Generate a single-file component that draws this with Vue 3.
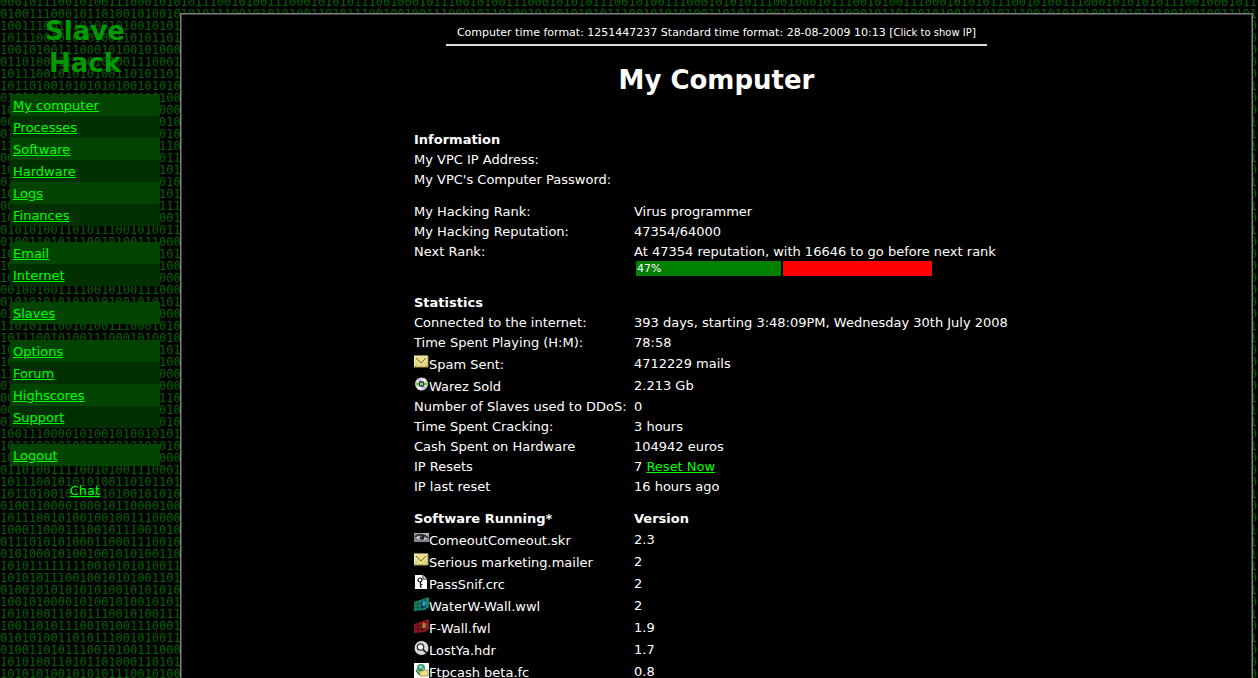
<template>
  <div class="page">
    <pre class="page__bits" aria-hidden="true">{{ backdrop }}</pre>

    <aside class="side">
      <h2 class="side__logo">Slave<br />Hack</h2>
      <nav class="side__nav">
        <ul v-for="(group, i) in menu" :key="i" class="side__group">
          <li v-for="item in group" :key="item" class="side__item">
            <a href="#" class="link">{{ item }}</a>
          </li>
        </ul>
      </nav>
      <a href="#" class="link side__chat">Chat</a>
    </aside>

    <main class="panel">
      <div class="clock">
        Computer time format: 1251447237 Standard time format: 28-08-2009 10:13
        [<button type="button" class="clock__ip">Click to show IP</button>]
      </div>
      <h1 class="panel__title">My Computer</h1>

      <table class="info">
        <tbody v-for="section in sections" :key="section.id" class="info__section">
          <tr v-if="section.title">
            <th scope="col">{{ section.title }}</th>
            <th scope="col">{{ section.second }}</th>
          </tr>
          <tr v-for="row in section.rows" :key="row.label" :class="{ 'info__row--icon': row.icon }">
            <td>
              <span class="info__label">
                <svg v-if="row.icon" class="icon" viewBox="0 0 15 15" aria-hidden="true">
                  <g v-if="row.icon === 'mail'">
                    <rect x="0" y="1" width="14" height="11" fill="#e8dc8c" />
                    <path d="M0 12V1h14" fill="none" stroke="#fff6bd" />
                    <path d="M0 12h14V1" fill="none" stroke="#a3924b" />
                    <path d="M2 3l5 5 5-5" fill="none" stroke="#7b692b" />
                    <path d="M1 11l3-3M13 11l-3-3" fill="none" stroke="#c9b866" />
                  </g>
                  <g v-else-if="row.icon === 'disc'">
                    <circle cx="7.5" cy="7" r="6.5" fill="#dedede" />
                    <path d="M7.5 7L1 5v4zM7.5 7L14 5v4z" fill="#72d72f" />
                    <path d="M7.5 7L3 2l3-1zM7.5 7l5 4-3 2z" fill="#c6a6e4" />
                    <path d="M7.5 7l3-6 2 2zM7.5 7l-4 5 3 1z" fill="#fff" />
                    <circle cx="7.5" cy="7" r="3" fill="#153c36" />
                    <circle cx="7.5" cy="7" r="1.5" fill="#eee" />
                    <circle cx="7.5" cy="7" r="0.6" fill="#000" />
                  </g>
                  <g v-else-if="row.icon === 'eye'">
                    <rect x="0" y="2" width="15" height="9" fill="#858585" />
                    <path d="M0 3q7-2 15 2V2H0z" fill="#b8b8b8" />
                    <path d="M1 6q6-5 13 1-7 5-13-1z" fill="#c9c9c9" />
                    <path d="M1 6q6-5 13 1" fill="none" stroke="#292929" stroke-width="1.5" />
                    <circle cx="8" cy="6.5" r="2.4" fill="#202020" />
                    <circle cx="7.2" cy="5.8" r="0.6" fill="#ddd" />
                  </g>
                  <g v-else-if="row.icon === 'key'">
                    <path d="M1 0h8l4 4v10H1z" fill="#fff" />
                    <path d="M9 0v4h4" fill="none" stroke="#333" />
                    <circle cx="6" cy="5" r="2" fill="none" stroke="#111" stroke-width="1.2" />
                    <path d="M6.5 7v5.5M6 9.5h2.5M6 12h2" fill="none" stroke="#111" stroke-width="1.2" />
                  </g>
                  <g v-else-if="row.icon === 'waterwall' || row.icon === 'firewall'">
                    <path d="M0 5l9-3 6-2v10l-4 3-11 1z" :fill="row.icon === 'firewall' ? '#8c1720' : '#148263'" />
                    <path
                      d="M0 8l8-2M0 11l8-1M4 4v9"
                      fill="none"
                      :stroke="row.icon === 'firewall' ? '#5c0a14' : '#0a5c46'"
                    />
                    <path d="M7 5l5-3v8l-5 2z" :fill="row.icon === 'firewall' ? '#431010' : '#093469'" />
                    <ellipse cx="10" cy="6.5" rx="1.8" ry="3" :fill="row.icon === 'firewall' ? '#d68217' : '#168bd2'" />
                    <path d="M10 5v3" :stroke="row.icon === 'firewall' ? '#397ca1' : '#c4a02d'" />
                  </g>
                  <g v-else-if="row.icon === 'lens'">
                    <circle cx="7.5" cy="7" r="7" fill="#d9d9d9" />
                    <circle cx="6.5" cy="6" r="3.2" fill="#f7f7f7" stroke="#333" stroke-width="1.3" />
                    <path d="M9 8.5l3.5 3.5" stroke="#333" stroke-width="2" />
                  </g>
                  <g v-else>
                    <rect width="15" height="15" fill="#fff" />
                    <circle cx="7" cy="5" r="4" fill="#2f955d" />
                    <path d="M4 4l3-2 2 2-2 2zM8 6l2-1v2z" fill="#8ad3e5" />
                    <path d="M2 7l3 4 2-1" fill="none" stroke="#237745" stroke-width="1.5" />
                    <path d="M6 8h3l1-1h4v6H6z" fill="#eee37c" stroke="#8b8235" stroke-width="0.7" />
                  </g>
                </svg>{{ row.label }}
              </span>
            </td>
            <td>
              {{ row.value }}
              <a v-if="row.action" href="#" class="link">{{ row.action }}</a>
              <div v-if="row.progress" class="bar">
                <span class="bar__done" :style="{ width: row.progress.width + '%' }">{{ row.progress.label }}</span>
                <span class="bar__left"></span>
              </div>
            </td>
          </tr>
        </tbody>
      </table>
    </main>
  </div>
</template>

<script setup>
const menu = [
  ['My computer', 'Processes', 'Software', 'Hardware', 'Logs', 'Finances'],
  ['Email', 'Internet'],
  ['Slaves'],
  ['Options', 'Forum', 'Highscores', 'Support'],
  ['Logout'],
]

const sections = [
  {
    id: 'information',
    title: 'Information',
    rows: [{ label: 'My VPC IP Address:' }, { label: "My VPC's Computer Password:" }],
  },
  {
    id: 'rank',
    rows: [
      { label: 'My Hacking Rank:', value: 'Virus programmer' },
      { label: 'My Hacking Reputation:', value: '47354/64000' },
      {
        label: 'Next Rank:',
        value: 'At 47354 reputation, with 16646 to go before next rank',
        progress: { label: '47%', width: 49 },
      },
    ],
  },
  {
    id: 'statistics',
    title: 'Statistics',
    rows: [
      { label: 'Connected to the internet:', value: '393 days, starting 3:48:09PM, Wednesday 30th July 2008' },
      { label: 'Time Spent Playing (H:M):', value: '78:58' },
      { label: 'Spam Sent:', value: '4712229 mails', icon: 'mail' },
      { label: 'Warez Sold', value: '2.213 Gb', icon: 'disc' },
      { label: 'Number of Slaves used to DDoS:', value: '0' },
      { label: 'Time Spent Cracking:', value: '3 hours' },
      { label: 'Cash Spent on Hardware', value: '104942 euros' },
      { label: 'IP Resets', value: '7', action: 'Reset Now' },
      { label: 'IP last reset', value: '16 hours ago' },
    ],
  },
  {
    id: 'software',
    title: 'Software Running*',
    second: 'Version',
    rows: [
      { label: 'ComeoutComeout.skr', value: '2.3', icon: 'eye' },
      { label: 'Serious marketing.mailer', value: '2', icon: 'mail' },
      { label: 'PassSnif.crc', value: '2', icon: 'key' },
      { label: 'WaterW-Wall.wwl', value: '2', icon: 'waterwall' },
      { label: 'F-Wall.fwl', value: '1.9', icon: 'firewall' },
      { label: 'LostYa.hdr', value: '1.7', icon: 'lens' },
      { label: 'Ftpcash beta.fc', value: '0.8', icon: 'ftp' },
    ],
  },
]

const bits = [
  '000101110010100111000101010111001010011100010101011100100010111001010011100010101011100101001110001010101110010001011100101001110001010101110010100111000101010101110010001011',
  '010011100010110100101001010101110010101010011010111001001001110001011010010100101010111001010101001101011100100100111000101101001010010101011100101010100110101110010010011101',
  '1001110010101001010010101',
  '1011100101010100110101101', '1001010011100010100101000', '0110100111100101001110001',
  '1011100101010100110101101', '1011010010101010100101010', '0100110000100010110000100',
  '1011100101001001001110000', '0000110001110010111001010', '0111010101000110001110010',
  '1101000101001001010100110', '0010111111110010101010011', '1010101110010010101001101',
  '0100101010101010010101010', '1001010000101001010010101', '0010100110101110010100111',
  '1001101011100101001110001', '0101010011010111001010011', '0100110101110010100111000',
  '1010100110101101000110101', '1010101001010101110010100', '1001010000101001010010000',
  '0010010011110010100111000', '0101010101010101001010101', '0100110000100010110000000',
  '1101011100101001110001010', '1011100101001110001010010', '1010100101001010011000101',
  '1000110001110010111001100', '1111010101000110001110000', '0101000101001001010100000',
  '0010111111110010101010110', '0010101110010010101001010', '0100101010101010010101010',
  '1001110000101001010010101', '1011100101001110010101010', '1001010000101001010010000',
  '0110100111100101001110001', '1011100101010100110101101', '1011010010101010100101010',
  '0100110000100010110000100', '1011100101001001001110000', '1000110001110010111001010',
  '0111010101000110001110010', '0101000101001001010100110', '1010111111110010101010011',
  '1010101110010010101001101', '0100101010101010010101010', '1001010000101001010010101',
  '1010100110101110010100111', '1001101011100101001110001', '0101010011010111001010011',
  '0100110101110010100111000', '1010100110101101000110101', '1010101001010101110010100',
]

// repeat every line far enough for wide windows
const backdrop = bits.map((line) => line.repeat(Math.ceil(400 / line.length))).join('\n')
</script>

<style>
html {
  background: #000;
  scrollbar-width: none;
}

body {
  margin: 0;
}
</style>

<style scoped>
.page {
  position: relative;
  display: flex;
  align-items: flex-start;
  min-height: 100vh;
  overflow: hidden;
  background: #000;
  color: #fff;
  font-family: Verdana, 'DejaVu Sans', sans-serif;
  font-size: 13px;
  line-height: 16px;
}

/* binary rain behind everything */
.page__bits {
  position: absolute;
  inset: -4px 0 0;
  margin: 0;
  overflow: hidden;
  color: #006400;
  font-family: 'DejaVu Sans Mono', monospace;
  font-size: 12px;
  line-height: 12px;
}

.link {
  color: #0f0;
  text-decoration: underline;
}

.side {
  position: relative;
  flex: none;
  display: flex;
  flex-direction: column;
  box-sizing: border-box;
  width: 180px;
  padding: 15px 20px 0 10px;
}

.side__logo {
  margin: 0 0 15px;
  color: #090;
  font-size: 26px;
  line-height: 32px;
  text-align: center;
}

.side__nav {
  display: flex;
  flex-direction: column;
  gap: 16px;
}

.side__group {
  margin: 0;
  padding: 0;
  list-style: none;
}

.side__item {
  padding: 4px 3px 2px;
  background: #040;
}

.side__item:nth-child(even) {
  background: #003000;
}

.side__chat {
  align-self: center;
  margin-top: 17px;
}

.panel {
  position: relative;
  flex: 1;
  display: flex;
  flex-direction: column;
  align-items: center;
  box-sizing: border-box;
  min-height: 100vh;
  margin: 13px 5px 0 0;
  padding: 11px 0 20px;
  border: 1px solid #808080;
  box-shadow: inset 0 0 0 1px #404040;
  background: #000;
}

.clock {
  padding: 0 11px 3px;
  border-bottom: 2px solid #ddd;
  font-size: 11px;
}

.clock__ip {
  padding: 0;
  border: 0;
  background: none;
  color: inherit;
  font-family: inherit;
  font-size: 10px;
  cursor: pointer;
}

.panel__title {
  margin: 18px 0 34px;
  font-size: 26px;
  line-height: 32px;
}

.info {
  border-collapse: collapse;
}

.info th,
.info td {
  box-sizing: border-box;
  width: 389px;
  padding: 2px;
  text-align: left;
  vertical-align: top;
}

.info th:first-child,
.info td:first-child {
  width: 220px;
  white-space: nowrap;
}

.info .info__row--icon td:last-child {
  padding-top: 3px;
}

.info__section + .info__section::before {
  content: '';
  display: block;
  height: 12px;
}

.info__label {
  display: flex;
}

.info__row--icon .info__label {
  height: 18px;
  align-items: flex-end;
}

.icon {
  flex: none;
  align-self: flex-start;
  width: 15px;
  height: 15px;
}

.bar {
  display: flex;
  gap: 2px;
  width: 296px;
  margin: 1px 2px 3px;
  font-size: 11px;
  line-height: 15px;
}

.bar__done {
  box-sizing: border-box;
  padding-left: 1px;
  background: green;
}

.bar__left {
  flex: 1;
  background: red;
}
</style>
